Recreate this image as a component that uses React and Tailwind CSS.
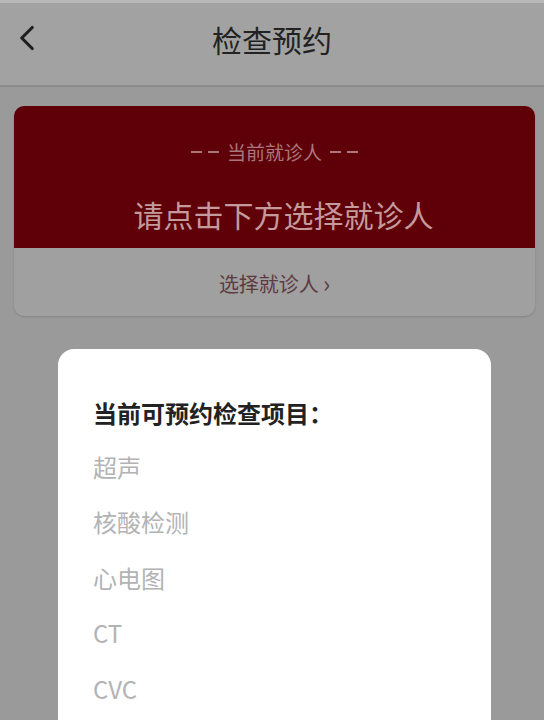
import { ChevronLeft } from "lucide-react";

const items = ["超声", "核酸检测", "心电图", "CT", "CVC"];

function Dashes() {
  return (
    <span className="flex items-center gap-[6px]">
      <span className="w-[11px] h-[2px] bg-[#a9787c]" />
      <span className="w-[11px] h-[2px] bg-[#a9787c]" />
    </span>
  );
}

export default function App() {
  return (
    <div
      className="w-[544px] h-[720px] overflow-hidden bg-[#9a9a9a]"
      style={{ fontFamily: '"Noto Sans CJK SC", "Noto Sans", sans-serif' }}
    >
      {/* header */}
      <div className="h-[87px] bg-[#a2a2a2] border-t-[3px] border-t-[#b8b8b8] border-b-[2px] border-b-[#8c8c8c] relative flex items-center justify-center">
        <ChevronLeft className="absolute left-[6px] top-[14px] w-[42px] h-[42px] text-[#1e1e1e]" strokeWidth={1.8} />
        <span className="text-[30px] text-[#222] -mt-[10px]">检查预约</span>
      </div>

      {/* current patient card */}
      <div className="ml-[14px] mt-[19px] w-[521px] rounded-[10px] overflow-hidden bg-[#a0a0a0] shadow-[0_1px_2px_rgba(0,0,0,0.15)]">
        <div className="h-[142px] bg-[#5f0008] flex flex-col items-center">
          <div className="mt-[36px] text-[19px] text-[#a9787c] leading-none flex items-center gap-[8px]">
            <Dashes />
            <span>当前就诊人</span>
            <Dashes />
          </div>
          <div className="mt-[38px] ml-[18px] text-[30px] text-[#c49a9d] leading-none">请点击下方选择就诊人</div>
        </div>
        <div className="h-[68px] flex items-center justify-center text-[20px] text-[#5e3a40] pt-[4px]">
          <span>选择就诊人</span>
          <span className="ml-[4px] text-[24px] -mt-[3px]">›</span>
        </div>
      </div>

      {/* modal */}
      <div className="ml-[58px] mt-[33px] w-[433px] h-[400px] bg-white rounded-t-[16px] pl-[35px] pt-[52px]">
        <div className="text-[24px] font-bold text-[#222] leading-none">当前可预约检查项目：</div>
        <div className="mt-[14px] flex flex-col">
          {items.map((it) => (
            <div key={it} className="h-[55.5px] flex items-center text-[24px] text-[#b3b3b3]">
              {it}
            </div>
          ))}
        </div>
      </div>
    </div>
  );
}
